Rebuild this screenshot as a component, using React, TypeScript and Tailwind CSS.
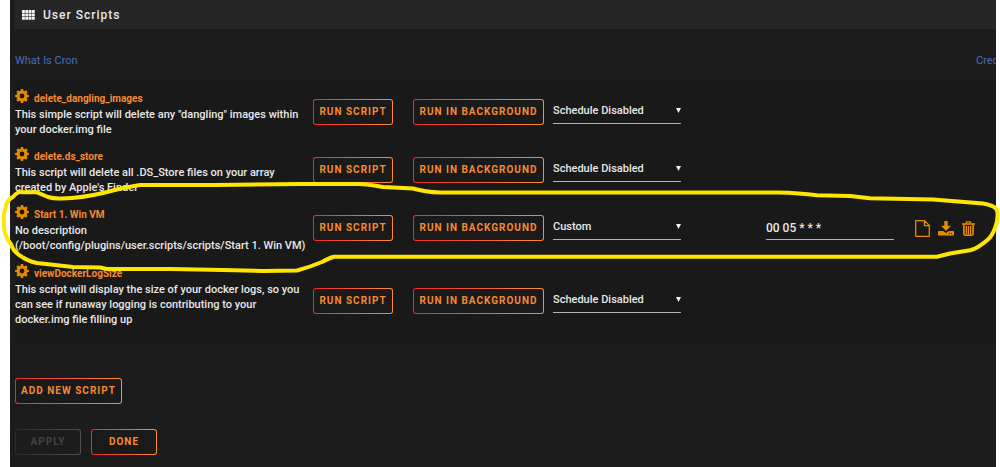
import React from "react";

type Script = {
  name: string;
  lines: string[];
  schedule: string;
  cron?: string;
};

const scripts: Script[] = [
  {
    name: "delete_dangling_images",
    lines: ['This simple script will delete any "dangling" images within', "your docker.img file"],
    schedule: "Schedule Disabled",
  },
  {
    name: "delete.ds_store",
    lines: ["This script will delete all .DS_Store files on your array", "created by Apple's Finder"],
    schedule: "Schedule Disabled",
  },
  {
    name: "Start 1. Win VM",
    lines: ["No description", "(/boot/config/plugins/user.scripts/scripts/Start 1. Win VM)"],
    schedule: "Custom",
    cron: "00 05 * * *",
  },
  {
    name: "viewDockerLogSize",
    lines: [
      "This script will display the size of your docker logs, so you",
      "can see if runaway logging is contributing to your",
      "docker.img file filling up",
    ],
    schedule: "Schedule Disabled",
  },
];

const teeth = [0, 45, 90, 135, 180, 225, 270, 315];

function GearIcon() {
  return (
    <svg viewBox="0 0 14 14" className="h-3.5 w-3.5 shrink-0" aria-hidden="true">
      <circle cx="7" cy="7" r="3.9" fill="none" stroke="#e68a00" strokeWidth="3" />
      {teeth.map((a) => (
        <path key={a} d="M5.4 2.6 L5.9 0.1 H8.1 L8.6 2.6 Z" fill="#e68a00" transform={`rotate(${a} 7 7)`} />
      ))}
    </svg>
  );
}

function GridIcon() {
  return (
    <svg viewBox="0 0 13 10" className="h-2.5 w-[13px]" fill="#f2f2f2" aria-hidden="true">
      {[0, 1, 2].map((r) =>
        [0, 1, 2, 3].map((c) => (
          <rect key={`${r}-${c}`} x={c * 3.3} y={r * 3.4} width="2.9" height="2.9" rx="0.3" />
        )),
      )}
    </svg>
  );
}

function FileIcon() {
  return (
    <svg viewBox="0 0 15 17" className="h-[17px] w-[15px]" fill="none" stroke="#e68a00" strokeWidth="1.3" strokeLinejoin="round" aria-hidden="true">
      <path d="M0.7 0.7 H9.6 L14.3 5.4 V16.3 H0.7 Z M9.4 0.9 V5.7 H14.1" />
    </svg>
  );
}

function DownloadIcon() {
  return (
    <svg viewBox="0 0 16 15" className="h-[15px] w-4" fill="#e68a00" aria-hidden="true">
      <path d="M6.3 0 H9.7 V4.8 H13 L8 9.9 L3 4.8 H6.3 Z" />
      <path
        fillRule="evenodd"
        d="M0.8 10 H5.2 L8 12 L10.8 10 H15.2 Q16 10 16 10.8 V13.7 Q16 14.5 15.2 14.5 H0.8 Q0 14.5 0 13.7 V10.8 Q0 10 0.8 10 Z M11 12 V13 H12 V12 Z M13 12 V13 H14 V12 Z"
      />
    </svg>
  );
}

function TrashIcon() {
  return (
    <svg viewBox="0 0 13 15" className="h-[15px] w-[13px]" fill="none" stroke="#e68a00" aria-hidden="true">
      <path d="M0 3 H13" strokeWidth="1.6" />
      <path d="M4 2.5 L4.6 0.8 H8.4 L9 2.5" strokeWidth="1.2" />
      <path d="M1.9 3.5 V12.8 Q1.9 14.1 3.1 14.1 H9.9 Q11.1 14.1 11.1 12.8 V3.5" strokeWidth="1.7" />
      <path d="M4.4 5 V13 M6.5 5 V13 M8.6 5 V13" strokeWidth="1.3" />
    </svg>
  );
}

function ActionButton({ children, className = "" }: { children: React.ReactNode; className?: string }) {
  return (
    <button
      type="button"
      className={`block h-[26px] whitespace-nowrap rounded-[3px] border border-transparent text-center text-[10px] leading-[14px] font-bold tracking-[1px] text-[#f58a32] [background:linear-gradient(#1a1a1a,#1a1a1a)_padding-box,linear-gradient(90deg,#f02a2a,#ff8c2f)_border-box] ${className}`}
    >
      {children}
    </button>
  );
}

function Highlight() {
  return (
    <svg
      viewBox="0 0 1000 467"
      className="pointer-events-none absolute top-0 left-0 h-[467px] w-[1000px]"
      fill="none"
      stroke="#ffe600"
      strokeWidth="4"
      strokeLinejoin="round"
      aria-hidden="true"
    >
      <path d="M140 185 L215 185 L300 184 L358 184 Q368 184 383 187 L413 188.5 Q425 192 440 192.5 H777 Q800 193 817 195.3 L850 196 L870 198.3 L933 199.5 L983 203.5 Q998 206 997.5 213 Q998 221 995 228 Q992 236 988 239.5 Q977 249 970 250.3 L950 253.5 L937 256.7 H334 Q329 258 322 262 Q310 267 297 270.5 L263 271 L223 270 L170 269 H107 L100 267.5 L73 267 L37 263 Q28 261 23 257.5 Q13 252 11 244 Q3 235 4 222 Q3 214 5 210 Q7 199 13 197 Q18 191 22 192.3 H37 L48 197 Q54 199 62 198.5 Q82 198 103 193 L123 188 Z" />
    </svg>
  );
}

export default function App() {
  return (
    <div className="relative overflow-hidden bg-white pr-1 pl-2.5 font-['Roboto','Open_Sans',sans-serif] text-xs text-[#e8e8e8]">
      <main className="bg-[#1c1c1c] pb-3">
        <header className="ml-[5px] flex h-[29px] items-center gap-2 bg-[#262626] pl-[7px]">
          <GridIcon />
          <h1 className="text-xs leading-4 font-medium tracking-[1px]">User Scripts</h1>
        </header>

        <nav className="ml-[5px] flex h-[52px] items-center justify-between pt-3 text-[11px] text-[#486dba]">
          <a href="#cron">What Is Cron</a>
          <a href="#credits" className="w-5 overflow-hidden">Cred</a>
        </nav>

        <div className="ml-[5px] bg-[#191919] pt-1 pb-3">
          <table className="w-full table-fixed border-collapse">
            <colgroup>
              <col className="w-[298px]" />
              <col className="w-[100px]" />
              <col className="w-[140px]" />
              <col className="w-[213px]" />
              <col className="w-[149px]" />
              <col />
            </colgroup>
            <tbody>
              {scripts.map((s) => {
                const tall = s.lines.length > 2;
                const cell = tall ? "pt-2.5 align-middle" : "pb-1 align-middle";
                return (
                  <tr key={s.name}>
                    <td className={tall ? "pt-[5px] pb-1.5 align-middle" : "pt-1 pb-1.5 align-middle"}>
                      <div className="flex h-[18px] items-start gap-[5px]">
                        <GearIcon />
                        <a href="#script" className="pt-1 text-[10px] leading-3 font-bold text-[#f58a32]">{s.name}</a>
                      </div>
                      <p className="text-[11px] leading-[15px] font-medium whitespace-nowrap">
                        {s.lines.map((l) => (
                          <span key={l} className="block">{l}</span>
                        ))}
                      </p>
                    </td>
                    <td className={cell}><ActionButton className="w-20">RUN SCRIPT</ActionButton></td>
                    <td className={cell}><ActionButton className="w-[131px]">RUN IN BACKGROUND</ActionButton></td>
                    <td className={cell}>
                      <div className="relative w-32">
                        <select
                          aria-label={`Schedule for ${s.name}`}
                          defaultValue={s.schedule}
                          className="block h-6 w-full appearance-none rounded-none border-b border-[#b5b5b5] bg-transparent text-[11px] font-medium"
                        >
                          <option>{s.schedule}</option>
                        </select>
                        <svg viewBox="0 0 5 5" className="pointer-events-none absolute top-2 right-0 h-[5px] w-[5px]" fill="#f2f2f2" aria-hidden="true">
                          <path d="M0 0 H5 L2.5 5 Z" />
                        </svg>
                      </div>
                    </td>
                    <td className={cell}>
                      {s.cron && (
                        <input
                          aria-label="Custom schedule"
                          defaultValue={s.cron}
                          className="block h-6 w-32 border-b border-[#b5b5b5] bg-transparent text-xs font-medium"
                        />
                      )}
                    </td>
                    <td className={cell}>
                      {s.cron && (
                        <div className="flex items-center gap-2">
                          <button type="button" aria-label="View log"><FileIcon /></button>
                          <button type="button" aria-label="Download log"><DownloadIcon /></button>
                          <button type="button" aria-label="Delete log"><TrashIcon /></button>
                        </div>
                      )}
                    </td>
                  </tr>
                );
              })}
            </tbody>
          </table>
        </div>

        <div className="ml-[5px] flex flex-col gap-[25px] pt-[33px]">
          <ActionButton className="w-[107px]">ADD NEW SCRIPT</ActionButton>
          <div className="flex gap-2.5">
            <button
              type="button"
              disabled
              className="h-[26px] w-[66px] rounded-[3px] border border-transparent text-[10px] leading-[14px] font-bold tracking-[1px] text-[#444] [background:linear-gradient(#1c1c1c,#1c1c1c)_padding-box,linear-gradient(90deg,#2b2b2b,#505050)_border-box]"
            >
              APPLY
            </button>
            <ActionButton className="w-[66px]">DONE</ActionButton>
          </div>
        </div>
      </main>
      <Highlight />
    </div>
  );
}
